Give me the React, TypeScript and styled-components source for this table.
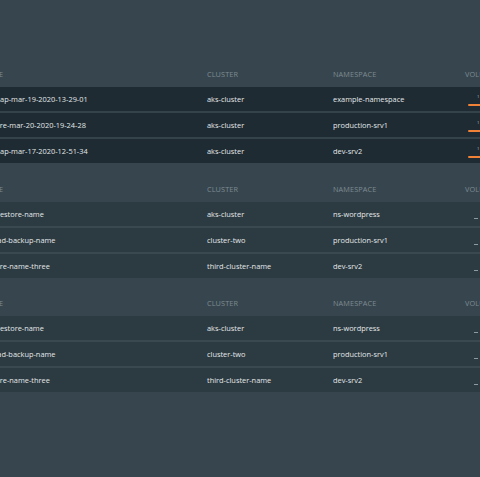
import React from "react";
import styled, { createGlobalStyle } from "styled-components";

const Global = createGlobalStyle`
  html, body { margin: 0; padding: 0; background: #37464e; }
  body { width: 480px; height: 477px; overflow: hidden; font-family: "Open Sans", "DejaVu Sans", sans-serif; }
`;

const Page = styled.div`
  width: 480px;
  height: 477px;
  overflow: hidden;
  background: #37464e;
  padding-top: 61px;
  box-sizing: border-box;
`;

const Section = styled.section`
  margin-left: -18px;
  width: 540px;
  margin-bottom: 12.5px;
`;

const Grid = styled.div`
  display: grid;
  grid-template-columns: 225px 126px 132px 1fr;
  align-items: center;
`;

const HeaderRow = styled(Grid)`
  height: 26px;
`;

const HeaderCell = styled.div`
  font-size: 7.3px;
  color: #7d8b92;
  letter-spacing: 0.1px;
  text-transform: uppercase;
  white-space: nowrap;
`;

const Body = styled.div<{ $gap: string }>`
  display: flex;
  flex-direction: column;
  gap: 2px;
  background: ${(p) => p.$gap};
`;

const Row = styled(Grid)<{ $bg: string }>`
  height: 24px;
  background: ${(p) => p.$bg};
`;

const Cell = styled.div`
  font-size: 7.4px;
  color: #e3e8ea;
  white-space: nowrap;
`;

const VolCell = styled.div`
  position: relative;
  height: 24px;
`;

const VolLabel = styled.span`
  position: absolute;
  left: 12px;
  top: 7px;
  font-size: 4px;
  color: #c9d0d4;
`;

const VolBar = styled.div`
  position: absolute;
  left: 3px;
  top: 17px;
  width: 40px;
  height: 2px;
  background: #f08238;
  border-radius: 1px;
`;

const Dash = styled.div`
  position: absolute;
  left: 9px;
  top: 16px;
  width: 4px;
  height: 1px;
  background: #8e9aa0;
`;

type RowData = { name: string; cluster: string; ns: string };

const backups: RowData[] = [
  { name: "es-snap-mar-19-2020-13-29-01", cluster: "aks-cluster", ns: "example-namespace" },
  { name: "restore-mar-20-2020-19-24-28", cluster: "aks-cluster", ns: "production-srv1" },
  { name: "es-snap-mar-17-2020-12-51-34", cluster: "aks-cluster", ns: "dev-srv2" },
];

const restores: RowData[] = [
  { name: "ops-restore-name", cluster: "aks-cluster", ns: "ns-wordpress" },
  { name: "upload-backup-name", cluster: "cluster-two", ns: "production-srv1" },
  { name: "restore-name-three", cluster: "third-cluster-name", ns: "dev-srv2" },
];

function Table({ rows, bg, gap, progress }: { rows: RowData[]; bg: string; gap: string; progress: boolean }) {
  return (
    <Section>
      <HeaderRow>
        <HeaderCell>Name</HeaderCell>
        <HeaderCell>Cluster</HeaderCell>
        <HeaderCell>Namespace</HeaderCell>
        <HeaderCell>Volumes</HeaderCell>
      </HeaderRow>
      <Body $gap={gap}>
        {rows.map((r) => (
          <Row key={r.name} $bg={bg}>
            <Cell>{r.name}</Cell>
            <Cell>{r.cluster}</Cell>
            <Cell>{r.ns}</Cell>
            <VolCell>
              {progress ? (
                <>
                  <VolLabel>1</VolLabel>
                  <VolBar />
                </>
              ) : (
                <Dash />
              )}
            </VolCell>
          </Row>
        ))}
      </Body>
    </Section>
  );
}

export default function App() {
  return (
    <Page>
      <Global />
      <Table rows={backups} bg="#1e2b32" gap="#34434a" progress />
      <Table rows={restores} bg="#2c3a41" gap="#3a4950" progress={false} />
      <Table rows={restores} bg="#2c3a41" gap="#3a4950" progress={false} />
    </Page>
  );
}
